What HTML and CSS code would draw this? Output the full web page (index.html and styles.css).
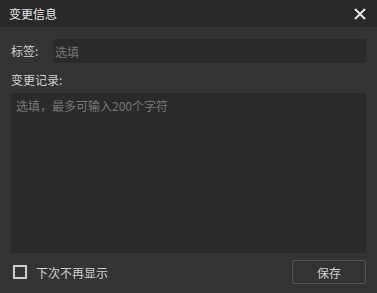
FILE: index.html
```html
<!DOCTYPE html>
<html lang="zh-CN">
<head>
    <meta charset="UTF-8">
    <title>变更信息</title>
    <link rel="stylesheet" href="styles.css">
</head>
<body>
    <div class="dialog">
        <div class="dialog-header">
            <span class="dialog-title">变更信息</span>
            <button type="button" class="close-button">
                <svg width="12" height="12" viewBox="0 0 12 12"><path d="M1 1L11 11M11 1L1 11" stroke="#e6e6e6" stroke-width="2"/></svg>
            </button>
        </div>
        <div class="dialog-body">
            <div class="row">
                <label for="tag" class="field-label">标签:</label>
                <input id="tag" class="custom-input" type="text" placeholder="选填">
            </div>
            <label for="log" class="field-label log-label">变更记录:</label>
            <textarea id="log" class="custom-textarea" placeholder="选填，最多可输入200个字符"></textarea>
            <div class="footer">
                <label class="check">
                    <input type="checkbox" class="custom-check">
                    <span class="check-box"></span>
                    <span>下次不再显示</span>
                </label>
                <button type="button" class="save-button">保存</button>
            </div>
        </div>
    </div>
</body>
</html>
```

FILE: styles.css
```css
body {
    margin: 0;
    background-color: #333333;
    font-family: "Noto Sans CJK SC", "Liberation Sans", sans-serif;
    font-size: 12px;
    color: #d0d0d0;
}

.dialog {
    width: 377px;
    height: 293px;
    display: flex;
    flex-direction: column;
}

.dialog-header {
    height: 27px;
    background-color: #282828;
    display: flex;
    align-items: center;
    justify-content: space-between;
    padding: 0 11px 0 9px;
}

.dialog-title {
    color: #e6e6e6;
    font-size: 12px;
    line-height: 16px;
}

.close-button {
    background: none;
    border: none;
    padding: 0;
    width: 12px;
    height: 12px;
    display: flex;
    cursor: pointer;
}

.dialog-body {
    flex: 1;
    padding: 12px 11px 0 11px;
    display: flex;
    flex-direction: column;
}

.row {
    display: flex;
    align-items: center;
    height: 24px;
}

.field-label {
    color: #d0d0d0;
    line-height: 16px;
}

.row .field-label {
    width: 42px;
}

.custom-input {
    flex: 1;
    height: 24px;
    box-sizing: border-box;
    background-color: #2a2a2a;
    border: none;
    border-radius: 2px;
    padding: 0 2px;
    color: #ddd;
    font: inherit;
    outline: none;
}

.custom-input::placeholder,
.custom-textarea::placeholder {
    color: #777;
}

.log-label {
    margin-top: 9px;
}

.custom-textarea {
    margin-top: 5px;
    height: 160px;
    box-sizing: border-box;
    background-color: #2a2a2a;
    border: none;
    border-radius: 0;
    padding: 5px 5px;
    color: #ddd;
    font: inherit;
    line-height: 16px;
    resize: none;
    outline: none;
}

.footer {
    margin-top: 7px;
    display: flex;
    align-items: center;
    justify-content: space-between;
}

.check {
    display: flex;
    align-items: center;
    gap: 9px;
    color: #d0d0d0;
    padding-left: 2px;
    cursor: pointer;
}

.custom-check {
    display: none;
}

.check-box {
    width: 10px;
    height: 10px;
    border: 2px solid #cfcfcf;
    border-radius: 1px;
}

.save-button {
    width: 74px;
    height: 24px;
    box-sizing: border-box;
    background-color: transparent;
    border: 1px solid #555;
    border-radius: 2px;
    color: #d0d0d0;
    font: inherit;
    cursor: pointer;
}
```
